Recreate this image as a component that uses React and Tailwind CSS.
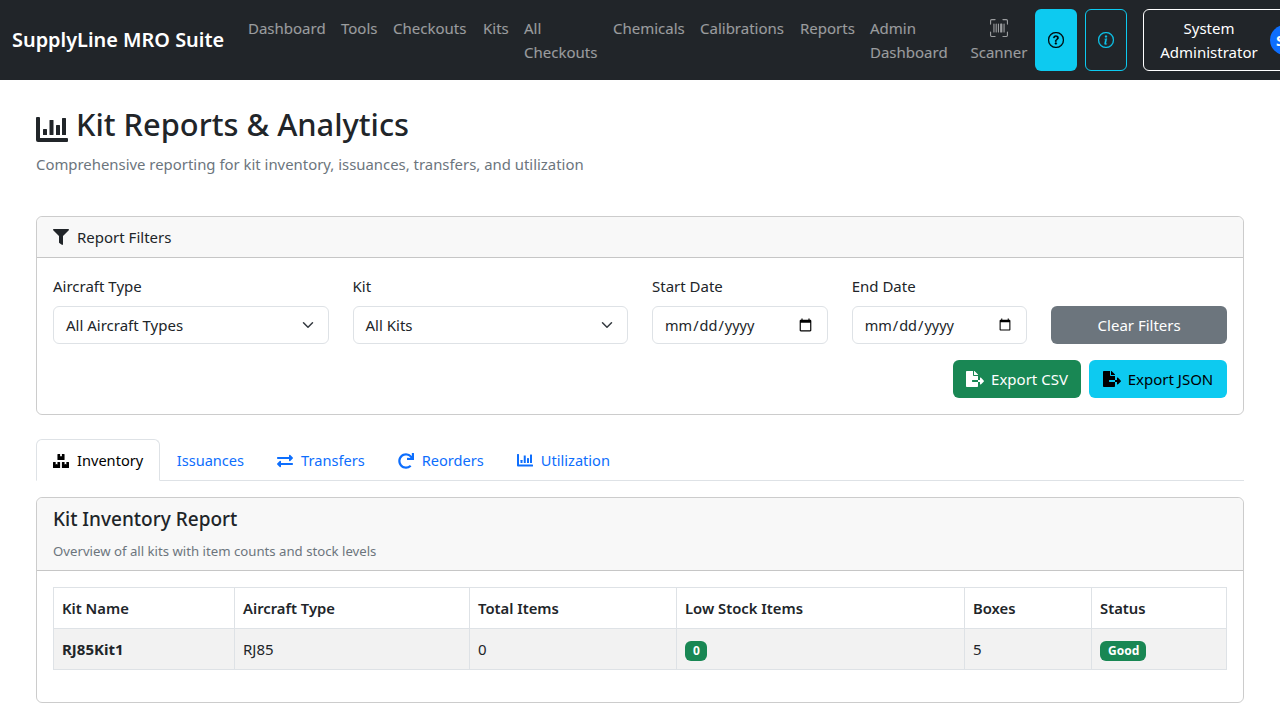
import React from "react";
import { BsUpcScan, BsQuestionCircle, BsInfoCircle } from "react-icons/bs";
import { FaFilter, FaFileExport, FaBoxes, FaExchangeAlt, FaRedo } from "react-icons/fa";

const navLinks = [
  { label: "Dashboard", width: "w-[93px]" },
  { label: "Tools", width: "w-[52px]" },
  { label: "Checkouts", width: "w-[90px]" },
  { label: "Kits", width: "w-[41px]" },
  { label: "All Checkouts", width: "w-[89px]" },
  { label: "Chemicals", width: "w-[87px]" },
  { label: "Calibrations", width: "w-[100px]" },
  { label: "Reports", width: "w-[70px]" },
  { label: "Admin Dashboard", width: "w-[93px]" },
];

// chart icon is wider than tall in the reference, so it gets its own drawing
function ChartIcon({ className }) {
  return (
    <svg className={className} viewBox="0 0 32 25" fill="currentColor">
      <path d="M0 1a1 1 0 0 1 1-1h2a1 1 0 0 1 1 1v20h27a1 1 0 0 1 1 1v2a1 1 0 0 1-1 1H2a2 2 0 0 1-2-2z" />
      <rect x="7" y="12" width="4" height="6" rx="0.5" />
      <rect x="13.5" y="3" width="4" height="15" rx="0.5" />
      <rect x="20" y="8" width="4" height="10" rx="0.5" />
      <rect x="26" y="1" width="4" height="17" rx="0.5" />
    </svg>
  );
}

const tabs = [
  { label: "Inventory", icon: FaBoxes, iconClass: "h-4 w-4", active: true },
  { label: "Issuances" },
  { label: "Transfers", icon: FaExchangeAlt, iconClass: "h-4 w-4" },
  { label: "Reorders", icon: FaRedo, iconClass: "h-4 w-4" },
  { label: "Utilization", icon: ChartIcon, iconClass: "h-[12.5px] w-4" },
];

function Chevron() {
  return (
    <svg width="12" height="12" viewBox="0 0 16 16" fill="none" stroke="#343a40" strokeWidth="2" strokeLinecap="round" strokeLinejoin="round">
      <path d="m2 5 6 6 6-6" />
    </svg>
  );
}

function SelectField({ label, value }) {
  return (
    <div className="col-span-3">
      <div className="mb-2 leading-6">{label}</div>
      <div className="flex h-[38px] items-center justify-between rounded-md border border-[#dee2e6] bg-white pl-3 pr-[14px]">
        <span>{value}</span>
        <Chevron />
      </div>
    </div>
  );
}

function DateField({ label }) {
  return (
    <div className="col-span-2">
      <div className="mb-2 leading-6">{label}</div>
      <input type="date" className="block h-[38px] w-full rounded-md border border-[#dee2e6] bg-white pl-[11px] pr-3 pt-px text-[14.5px] text-[#212529]" />
    </div>
  );
}

export default function App() {
  return (
    <div className="h-[720px] w-[1280px] overflow-hidden bg-white font-['Noto_Sans','Open_Sans',sans-serif] text-[15px] text-[#212529]">
      <nav className="flex h-20 items-center bg-[#212529] pl-3">
        <div className="mr-4 w-[212px] shrink-0 whitespace-nowrap text-[19.9px] font-semibold text-white">SupplyLine MRO Suite</div>
        <div className="flex h-12 shrink-0 items-start">
          {navLinks.map((link) => (
            <div key={link.label} className={`${link.width} shrink-0 px-2 leading-6 text-white/55`}>
              {link.label}
            </div>
          ))}
        </div>
        <div className="ml-2 flex w-[72px] shrink-0 flex-col items-center text-white/55">
          <div className="flex h-6 items-center">
            <BsUpcScan className="h-[18px] w-[18px]" />
          </div>
          <span className="leading-6">Scanner</span>
        </div>
        <div className="flex h-[62px] w-[42px] shrink-0 items-center justify-center rounded-md bg-[#0dcaf0] text-black">
          <BsQuestionCircle className="h-4 w-4" stroke="currentColor" strokeWidth={0.3} />
        </div>
        <div className="ml-2 flex h-[62px] w-[42px] shrink-0 items-center justify-center rounded-md border border-[#0dcaf0] text-[#0dcaf0]">
          <BsInfoCircle className="h-4 w-4" stroke="currentColor" strokeWidth={0.3} />
        </div>
        <div className="ml-4 flex h-[62px] w-[200px] shrink-0 items-center rounded-md border border-white pl-3 text-white">
          <span className="w-[106px] text-center leading-6">System Administrator</span>
          <span className="ml-2 flex h-[30px] w-[30px] items-center rounded-full bg-[#0d6efd] pl-[6px] font-bold">S</span>
        </div>
      </nav>

      <main className="px-9 pt-6">
        <h1 className="flex h-[39px] items-center text-[30.8px] font-medium leading-[40px]">
          <ChartIcon className="mr-2 mt-[11px] h-[25px] w-8" />
          Kit Reports &amp; Analytics
        </h1>
        <p className="mt-[9px] text-[14.9px] leading-6 text-[#6c757d]">Comprehensive reporting for kit inventory, issuances, transfers, and utilization</p>

        <section className="mt-10 rounded-md border border-black/20">
          <div className="flex h-[41px] items-center gap-2 rounded-t-md border-b border-black/20 bg-[#f8f8f8] px-4">
            <FaFilter className="h-4 w-4 text-[#212529]" />
            <span>Report Filters</span>
          </div>
          <div className="px-4 pt-4 pb-4">
            <div className="grid grid-cols-12 items-end gap-6">
              <SelectField label="Aircraft Type" value="All Aircraft Types" />
              <SelectField label="Kit" value="All Kits" />
              <DateField label="Start Date" />
              <DateField label="End Date" />
              <div className="col-span-2 flex h-[38px] items-center justify-center rounded-md bg-[#6c757d] text-white">Clear Filters</div>
            </div>
            <div className="mt-4 flex justify-end gap-2">
              <div className="flex h-[38px] w-[128px] items-center justify-center gap-[7px] rounded-md bg-[#198754] text-white">
                <FaFileExport className="h-4 w-[18px]" />
                Export CSV
              </div>
              <div className="flex h-[38px] w-[138px] items-center justify-center gap-[7px] rounded-md bg-[#0dcaf0] text-black">
                <FaFileExport className="h-4 w-[18px]" />
                Export JSON
              </div>
            </div>
          </div>
        </section>

        <div className="mt-6 flex h-[42px] border-b border-[#dee2e6] text-[14.6px]">
          {tabs.map((tab) => {
            const Icon = tab.icon;
            return (
              <div
                key={tab.label}
                className={
                  tab.active
                    ? "-mb-px flex h-[42px] items-center gap-2 rounded-t-md border border-[#dee2e6] border-b-white bg-white px-4 pt-px text-black"
                    : "flex h-[42px] items-center gap-2 px-[16.5px] pt-px text-[#0d6efd]"
                }
              >
                {Icon && <Icon className={tab.iconClass} />}
                {tab.label}
              </div>
            );
          })}
        </div>

        <section className="mt-4 rounded-md border border-black/20">
          <div className="h-[73px] rounded-t-md border-b border-black/20 bg-[#f8f8f8] px-4 pt-[9px]">
            <div className="text-[19px] font-medium leading-6">Kit Inventory Report</div>
            <div className="mt-2 text-[13.2px] leading-6 text-[#6c757d]">Overview of all kits with item counts and stock levels</div>
          </div>
          <div className="p-4 pb-8">
            <table className="w-[1173px] table-fixed border-collapse border border-[#dee2e6]">
              <colgroup>
                <col className="w-[181px]" />
                <col className="w-[235px]" />
                <col className="w-[207px]" />
                <col className="w-[288px]" />
                <col className="w-[127px]" />
                <col className="w-[135px]" />
              </colgroup>
              <thead>
                <tr className="h-[41px] text-left text-[14.8px]">
                  <th className="border border-[#dee2e6] px-2 font-semibold">Kit Name</th>
                  <th className="border border-[#dee2e6] px-2 font-semibold">Aircraft Type</th>
                  <th className="border border-[#dee2e6] px-2 font-semibold">Total Items</th>
                  <th className="border border-[#dee2e6] px-2 font-semibold">Low Stock Items</th>
                  <th className="border border-[#dee2e6] px-2 font-semibold">Boxes</th>
                  <th className="border border-[#dee2e6] px-2 font-semibold">Status</th>
                </tr>
              </thead>
              <tbody>
                <tr className="h-[41px] bg-[#f2f2f2]">
                  <td className="border border-[#dee2e6] px-2 font-bold">RJ85Kit1</td>
                  <td className="border border-[#dee2e6] px-2">RJ85</td>
                  <td className="border border-[#dee2e6] px-2">0</td>
                  <td className="border border-[#dee2e6] px-2">
                    <span className="inline-block rounded-md bg-[#198754] py-1 pl-2 pr-[7px] text-xs font-bold leading-none text-white">0</span>
                  </td>
                  <td className="border border-[#dee2e6] px-2">5</td>
                  <td className="border border-[#dee2e6] px-2">
                    <span className="inline-block rounded-md bg-[#198754] py-1 pl-2 pr-[7px] text-xs font-bold leading-none text-white">Good</span>
                  </td>
                </tr>
              </tbody>
            </table>
          </div>
        </section>
      </main>
    </div>
  );
}
